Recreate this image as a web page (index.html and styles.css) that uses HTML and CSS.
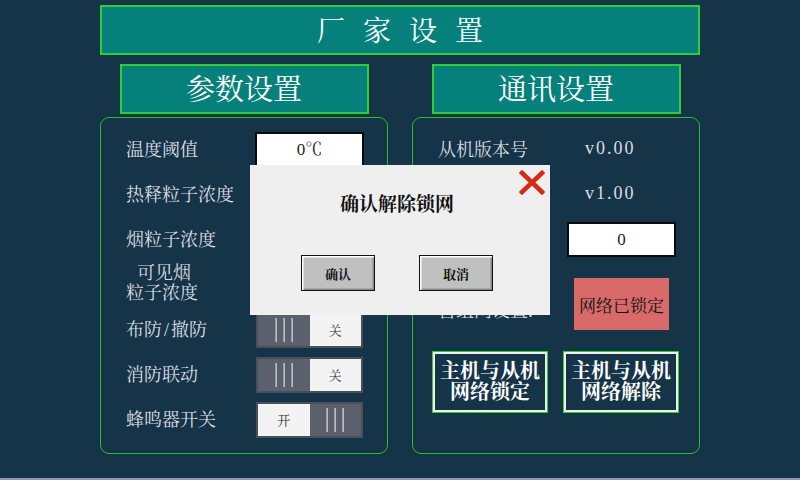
FILE: index.html
```html
<!DOCTYPE html>
<html lang="zh">
<head>
<meta charset="utf-8">
<title>厂家设置</title>
<link rel="stylesheet" href="styles.css">
</head>
<body>
<div class="screen">
  <div class="title-bar">厂家设置</div>
  <div class="columns">
    <section class="col">
      <div class="sub-title">参数设置</div>
      <div class="panel">
        <div class="row"><span class="label">温度阈值</span><div class="input">0℃</div></div>
        <div class="row"><span class="label">热释粒子浓度</span><div class="input">0</div></div>
        <div class="row"><span class="label">烟粒子浓度</span><div class="input">0</div></div>
        <div class="row"><span class="label two-line"><span class="indent">可见烟</span><br>粒子浓度</span><div class="input">0</div></div>
        <div class="row"><span class="label">布防<span class="slash">/</span>撤防</span>
          <div class="toggle"><span class="grip"><i></i><i></i><i></i></span><span class="face">关</span></div></div>
        <div class="row"><span class="label">消防联动</span>
          <div class="toggle"><span class="grip"><i></i><i></i><i></i></span><span class="face">关</span></div></div>
        <div class="row"><span class="label">蜂鸣器开关</span>
          <div class="toggle"><span class="face">开</span><span class="grip"><i></i><i></i><i></i></span></div></div>
      </div>
    </section>
    <section class="col">
      <div class="sub-title">通讯设置</div>
      <div class="panel">
        <div class="row"><span class="label">从机版本号</span><span class="value">v0.00</span></div>
        <div class="row"><span class="label">主机版本号</span><span class="value">v1.00</span></div>
        <div class="row"><span class="label">自组网网络号</span><div class="input">0</div></div>
        <div class="row row-tall"><span class="label low">自组网设置:</span><div class="locked">网络已锁定</div></div>
        <div class="btn-row">
          <div class="net-btn">主机与从机<br>网络锁定</div>
          <div class="net-btn">主机与从机<br>网络解除</div>
        </div>
      </div>
    </section>
  </div>
</div>

<div class="dialog">
  <svg class="close" width="26" height="25" viewBox="0 0 26 25">
    <path d="M3 3 L23 22 M23 3 L3 22" stroke="#d62a19" stroke-width="4.6" stroke-linecap="square" fill="none"/>
  </svg>
  <div class="dlg-title">确认解除锁网</div>
  <div class="dlg-buttons">
    <div class="dlg-btn">确认</div>
    <div class="dlg-btn">取消</div>
  </div>
</div>
</body>
</html>
```
FILE: styles.css
```css
html, body {
  margin: 0;
  padding: 0;
  background: #163448;
  width: 800px;
  height: 480px;
  overflow: hidden;
  font-family: "Liberation Serif", "Noto Serif CJK SC", "Noto Sans CJK SC", serif;
}

.screen {
  height: 480px;
  border-bottom: 2px solid #8f97bb;
  padding-top: 5px;
  box-sizing: border-box;
  position: relative;
}

.title-bar {
  width: 600px;
  height: 50px;
  margin-left: 100px;
  box-sizing: border-box;
  background: #06807a;
  border: 2px solid #33cc33;
  color: #ffffff;
  font-size: 28px;
  letter-spacing: 18px;
  text-indent: 18px;
  line-height: 49px;
  text-align: center;
}

.columns {
  display: grid;
  grid-template-columns: 288px 288px;
  column-gap: 24px;
  margin-left: 100px;
  margin-top: 9px;
}

.col {
  display: flex;
  flex-direction: column;
  align-items: center;
}

.sub-title {
  width: 249px;
  height: 50px;
  box-sizing: border-box;
  background: #06807a;
  border: 2px solid #33cc33;
  color: #ffffff;
  font-size: 29px;
  line-height: 48px;
  text-align: center;
}

.panel {
  margin-top: 3px;
  width: 288px;
  height: 337px;
  box-sizing: border-box;
  border: 1.5px solid #2dbb2d;
  border-radius: 9px;
  padding: 9px 0 0 25px;
}

.row {
  display: grid;
  grid-template-columns: 129px 109px;
  align-items: center;
  height: 45px;
}

.label {
  color: #d9dee2;
  font-size: 18px;
  white-space: nowrap;
  padding-bottom: 4px;
}

.slash {
  padding: 0 2px;
}

.label.two-line {
  line-height: 20px;
}

.indent {
  padding-left: 11px;
}

.input {
  height: 35px;
  box-sizing: border-box;
  background: #ffffff;
  border: 2px solid #0a0a0a;
  color: #222;
  font-size: 17px;
  line-height: 31px;
  text-align: center;
}

.toggle {
  width: 107px;
  height: 36px;
  box-sizing: border-box;
  margin-left: 1px;
  border: 2px solid #4a4f5d;
  display: flex;
  background: #4a4f5d;
}

.grip {
  flex: 1;
  background: #5c606c;
  display: flex;
  justify-content: center;
  align-items: center;
  gap: 6px;
}

.grip i {
  display: block;
  width: 2px;
  height: 24px;
  background: linear-gradient(90deg, #8c929c, #c8ccd2);
}

.face {
  flex: 1;
  background: #f3f3f3;
  color: #333;
  font-size: 13px;
  display: flex;
  align-items: center;
  justify-content: center;
}

.value {
  color: #d9dee2;
  font-family: "Liberation Serif", serif;
  font-size: 18px;
  letter-spacing: 2px;
  padding-left: 18px;
  padding-bottom: 2px;
}

.row-tall {
  height: 52px;
  margin-top: 16px;
}

.label.low {
  margin-top: 14px;
}

.locked {
  width: 95px;
  height: 52px;
  margin-left: 7px;
  background: #d86a6a;
  color: #111;
  font-size: 17px;
  display: flex;
  align-items: center;
  justify-content: center;
}

.btn-row {
  display: flex;
  gap: 15px;
  margin-top: 21px;
  margin-left: -6px;
}

.net-btn {
  width: 116px;
  height: 62px;
  box-sizing: border-box;
  border: 1.5px solid #33cc33;
  box-shadow: inset 0 0 0 2px #eef2ee;
  color: #ffffff;
  font-size: 20px;
  font-weight: bold;
  line-height: 21px;
  display: flex;
  align-items: center;
  justify-content: center;
  text-align: center;
}

.dialog {
  position: absolute;
  left: 250px;
  top: 165px;
  width: 300px;
  height: 150px;
  background: #efefef;
}

.close {
  position: absolute;
  right: 5px;
  top: 5px;
}

.dlg-title {
  margin-top: 28px;
  height: 24px;
  line-height: 24px;
  text-align: center;
  font-size: 19px;
  font-weight: bold;
  color: #111;
  padding-right: 6px;
}

.dlg-buttons {
  display: flex;
  gap: 44px;
  margin-top: 38px;
  margin-left: 51px;
}

.dlg-btn {
  width: 74px;
  height: 36px;
  box-sizing: border-box;
  background: #c0c0c0;
  border: 1.5px solid #111;
  box-shadow: inset 1.5px 1.5px 0 #ffffff, inset -1.5px -1.5px 0 #8a8a8a;
  font-size: 13px;
  font-weight: bold;
  color: #111;
  display: flex;
  align-items: center;
  justify-content: center;
}
```
